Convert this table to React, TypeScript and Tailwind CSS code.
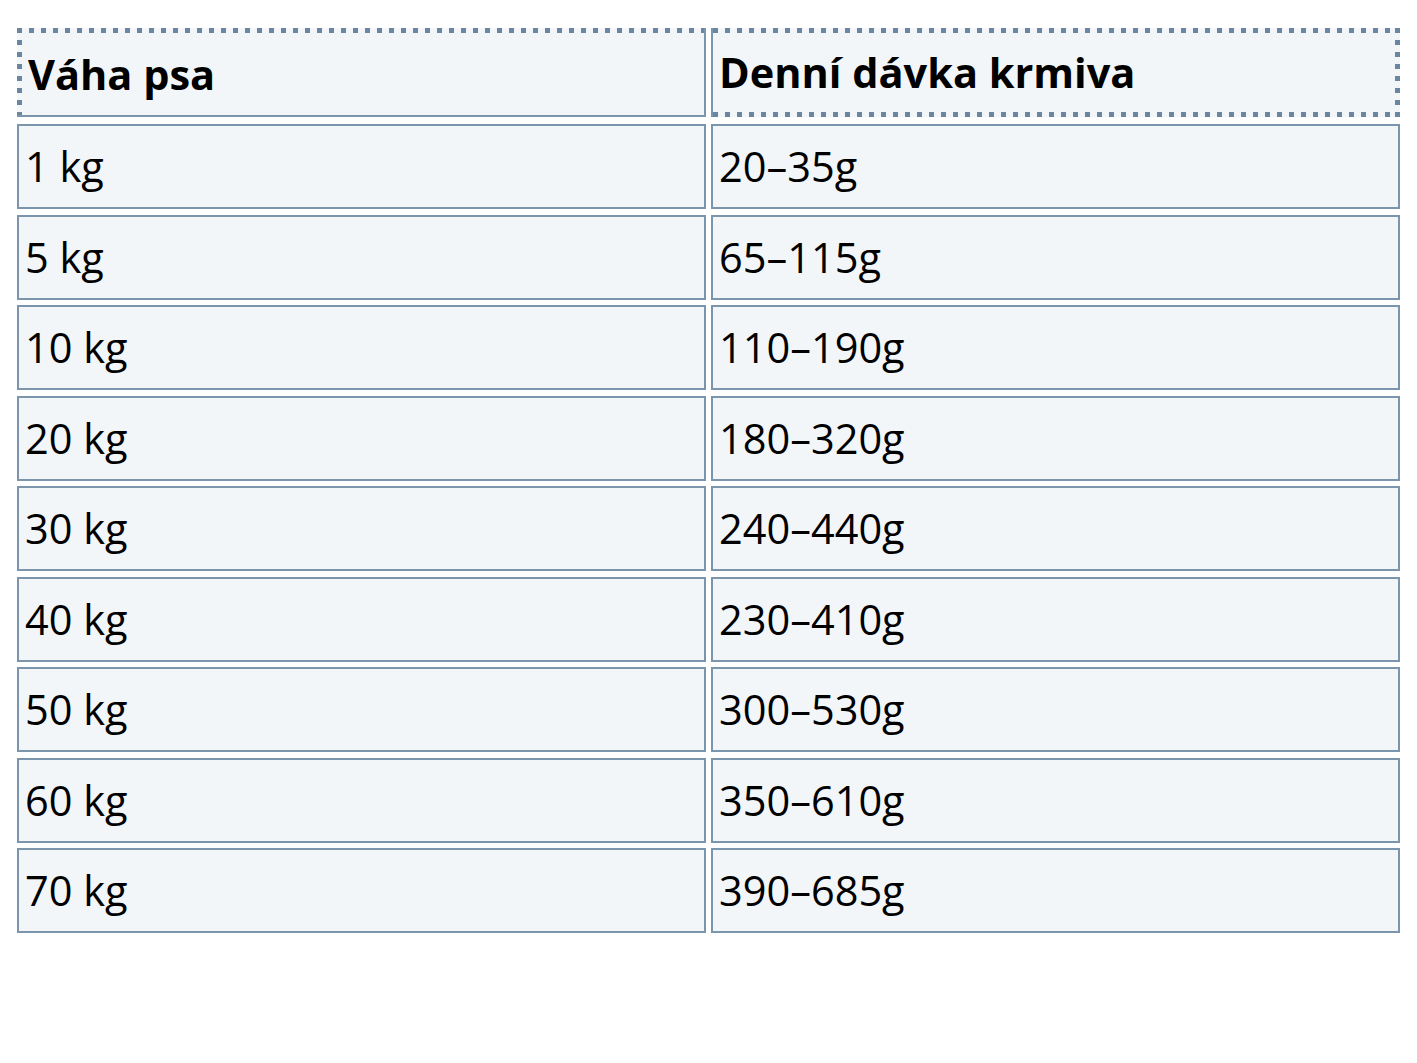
const rows = [
  ["1 kg", "20–35g"],
  ["5 kg", "65–115g"],
  ["10 kg", "110–190g"],
  ["20 kg", "180–320g"],
  ["30 kg", "240–440g"],
  ["40 kg", "230–410g"],
  ["50 kg", "300–530g"],
  ["60 kg", "350–610g"],
  ["70 kg", "390–685g"],
];

export default function App() {
  return (
    <div
      className="min-h-screen bg-white px-[17px] pt-[28px] text-black"
      style={{ fontFamily: '"Open Sans", "Noto Sans", sans-serif' }}
    >
      <div className="grid grid-cols-2 gap-x-[5px]">
        {/* header row - square dotted edges like the focus outline in the shot */}
        <div className="flex h-[89px] items-center pt-[5px] pl-[11px] text-[41.5px] font-bold border-r-2 border-b-2 border-[#7b95ac] [background:repeating-linear-gradient(90deg,#6a87a2_0_5px,transparent_5px_12px)_top_left/100%_5px_no-repeat,repeating-linear-gradient(180deg,#6a87a2_0_5px,transparent_5px_12px)_top_left/5px_100%_no-repeat,#f3f6f8]">
          Váha psa
        </div>
        <div className="flex h-[89px] items-center pr-[5px] pl-[6px] text-[41.5px] font-bold border-l-2 border-[#7b95ac] [background:repeating-linear-gradient(90deg,#6a87a2_0_5px,transparent_5px_12px)_top_left/100%_5px_no-repeat,repeating-linear-gradient(180deg,#6a87a2_0_5px,transparent_5px_12px)_top_right/5px_100%_no-repeat,repeating-linear-gradient(90deg,#6a87a2_0_5px,transparent_5px_12px)_bottom_left/100%_5px_no-repeat,#f3f6f8]">
          Denní dávka krmiva
        </div>
      </div>
      <div className="mt-[7px] grid grid-cols-2 gap-x-[5px] gap-y-[5.5px]">
        {rows.map(([w, d]) => (
          <>
            <div
              key={w + "a"}
              className="flex h-[85px] items-center border-2 border-[#7b95ac] bg-[#f3f6f8] pl-[6px] text-[41.5px]"
            >
              {w}
            </div>
            <div
              key={w + "b"}
              className="flex h-[85px] items-center border-2 border-[#7b95ac] bg-[#f3f6f8] pl-[6px] text-[41.5px]"
            >
              {d}
            </div>
          </>
        ))}
      </div>
    </div>
  );
}
